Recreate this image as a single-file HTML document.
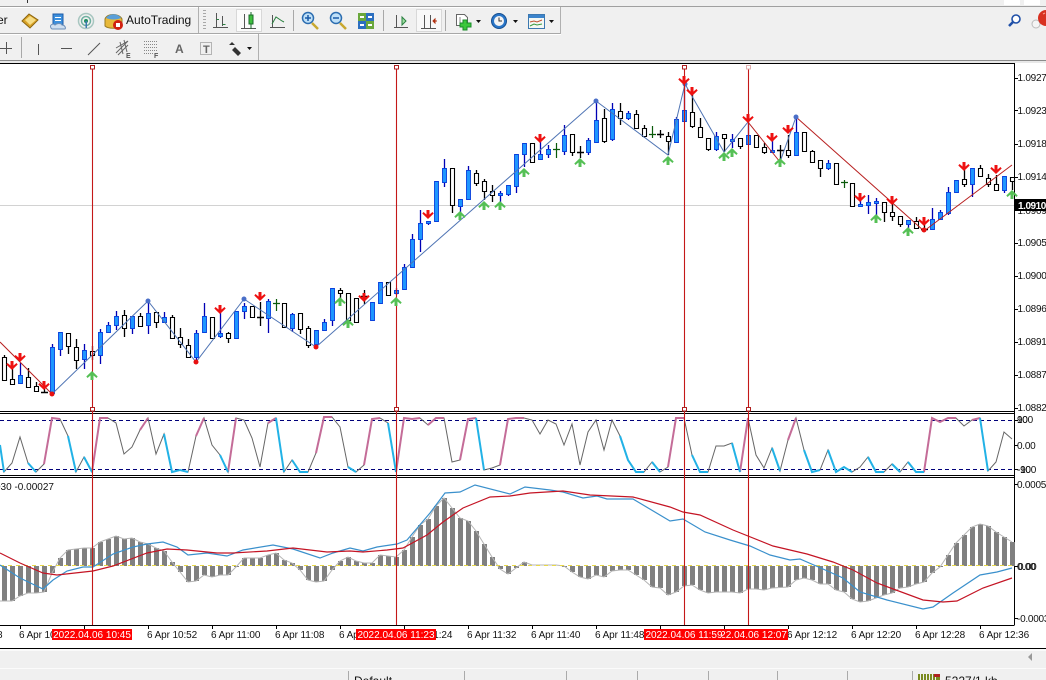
<!DOCTYPE html>
<html><head><meta charset="utf-8"><style>
html,body{margin:0;padding:0;width:1046px;height:680px;overflow:hidden;background:#f0f0f0}
svg{position:absolute;left:0;top:0;display:block}
text{font-family:"Liberation Sans",sans-serif;font-size:10px;fill:#111}
.t text{text-anchor:start;letter-spacing:-.1px}
.p text{letter-spacing:-.25px}
.tag text{fill:#fff;text-anchor:middle}
</style></head><body>
<svg width="1046" height="680" viewBox="0 0 1046 680" xmlns="http://www.w3.org/2000/svg">
<defs>
<path id="ad" d="M-1.5 -5h3v4.5l3 -2.5l1.200 1.500l-5.700 5.500l-5.700 -5.500l1.200 -1.500l3 2.500z"/>
<path id="au" d="M-1.500 5h3v-4.500l3 2.500l1.200 -1.500l-5.700 -5.500l-5.700 5.500l1.200 1.500l3 -2.500z"/>
<path id="dd" d="M0 0h5l-2.500 3z" />
</defs>
<!-- toolbar bg -->
<rect width="1046" height="64" fill="#f0f0f0"/>
<rect x="1004" y="0" width="16" height="5" fill="#fff"/><rect x="1024" y="0" width="16" height="5" fill="#fff"/>
<rect x="27" y="0" width="1" height="3" fill="#333"/>
<rect y="6" width="1046" height="1" fill="#a0a0a0"/>
<rect y="7" width="561" height="1" fill="#fff"/>
<rect y="33" width="561" height="1" fill="#a8a8a8"/><rect y="34" width="561" height="1" fill="#fff"/>
<rect x="560" y="7" width="1" height="27" fill="#b0b0b0"/>
<rect x="258" y="34" width="1" height="26" fill="#b0b0b0"/>
<rect y="60" width="1046" height="1" fill="#8c8c8c"/><rect y="61" width="1046" height="2" fill="#e8e8e8"/>
<text x="-3" y="24" style="font-size:12px">er</text>
<!-- book -->
<path d="M22 21l7-7 9 6-8 8z" fill="#d9a227" stroke="#8a6510"/><path d="M25 20l5-4 6 4-6 5z" fill="#f6dd86"/>
<!-- doc/cloud -->
<rect x="53" y="14" width="10" height="11" fill="#3c8fdc" stroke="#1e5ba8"/><rect x="55" y="17" width="6" height="1" fill="#fff"/><rect x="55" y="20" width="6" height="1" fill="#fff"/>
<path d="M51 28c-2-3 2-5 4-3 2-2 6-2 7 0 3 0 4 3 3 4H52z" fill="#cfdff0" stroke="#6d8fb8"/>
<!-- radar -->
<circle cx="86" cy="21" r="7.500" fill="none" stroke="#a8c6c0" stroke-width="1.500"/><circle cx="86" cy="21" r="4.500" fill="none" stroke="#6fb0a0" stroke-width="1.500"/><circle cx="86" cy="21" r="2" fill="#1f8f5f"/><rect x="85.500" y="21" width="1.500" height="7" fill="#3c78b0"/>
<!-- autotrading -->
<path d="M105 19c2-6 14-6 17 0v7c-3 3-14 3-17 0z" fill="#e8b93a" stroke="#9a7a20"/><path d="M106 18c3-5 12-5 15 0-4 2-11 2-15 0z" fill="#5a9fd8"/>
<circle cx="118" cy="25" r="5" fill="#d02010"/><rect x="116" y="23" width="4" height="4" fill="#fff"/>
<text x="126" y="24" style="font-size:12px;letter-spacing:.03px">AutoTrading</text>
<!-- grip -->
<path d="M203 10.500h3M203 13.500h3M203 16.500h3M203 19.500h3M203 22.500h3M203 25.500h3M203 28.500h3" stroke="#a8a8a8"/>
<rect x="198" y="7" width="1" height="26" fill="#b0b0b0"/>
<!-- chart icons -->
<g stroke="#555" fill="none"><path d="M216.500 13v14M213 27.500h15M222.500 16v10"/><path d="M219 19.500h-2.500M222.500 24.500h3" stroke="#2a8040"/></g>
<rect x="236.500" y="9.500" width="25" height="22" fill="#fbfbfb" stroke="#d8d8d8"/>
<g stroke="#555" fill="none"><path d="M244.500 14v14M241 28.500h15"/></g><path d="M251 12v17" stroke="#1a6a2a"/><rect x="249" y="15" width="4" height="9" fill="#3fc03f" stroke="#1a6a2a"/>
<g stroke="#555" fill="none"><path d="M272.500 15v13M270 27.500h15"/><path d="M272 24l4-7 6 4 2 1" stroke="#2a8040"/></g>
<rect x="293" y="10" width="1" height="21" fill="#a8a8a8"/>
<!-- zoom -->
<circle cx="308" cy="18" r="5.500" fill="#bfe0f8" stroke="#2c6db0" stroke-width="1.500"/><path d="M305 18h6M308 15v6" stroke="#1a5aa8" stroke-width="1.500"/><path d="M312 23l6 6" stroke="#c8a830" stroke-width="2.500"/>
<circle cx="336" cy="18" r="5.500" fill="#bfe0f8" stroke="#2c6db0" stroke-width="1.500"/><path d="M333 18h6" stroke="#1a5aa8" stroke-width="1.500"/><path d="M340 23l6 6" stroke="#c8a830" stroke-width="2.500"/>
<!-- tile -->
<rect x="358" y="13" width="8" height="8" fill="#6aa83c"/><rect x="366" y="13" width="8" height="8" fill="#2c6fc0"/><rect x="358" y="21" width="8" height="8" fill="#2c6fc0"/><rect x="366" y="21" width="8" height="8" fill="#6aa83c"/>
<path d="M360 17h4M368 17h4M360 25h4M368 25h4" stroke="#fff" stroke-width="2"/>
<rect x="383" y="10" width="1" height="21" fill="#a8a8a8"/>
<g stroke="#555" fill="none"><path d="M396.500 15v13M394 27.500h14"/></g><path d="M402 17v8l4-4z" fill="#9fe0a0" stroke="#2a8040"/>
<rect x="416.500" y="9.500" width="25" height="22" fill="#f8f8f8" stroke="#d8d8d8"/>
<g stroke="#555" fill="none"><path d="M424.500 15v13M421 28.500h15M430.500 15v13"/></g><path d="M437 21h-4M433 21l2-2v4z" stroke="#b03010" fill="#b03010"/>
<rect x="445" y="10" width="1" height="21" fill="#a8a8a8"/>
<!-- new order -->
<path d="M456.500 14.500h8l3 3v8h-11z" fill="#fff" stroke="#666"/><path d="M460 17v7" stroke="#888"/>
<path d="M463 20h4v3h4v4h-4v3h-4v-3h-3v-4h3z" fill="#3cc83c" stroke="#1a8a2a"/>
<use href="#dd" x="476" y="20" fill="#111"/>
<circle cx="499" cy="21" r="7.500" fill="#2a76c8" stroke="#174f90"/><circle cx="499" cy="21" r="5" fill="#f4f4f4"/><path d="M499 17.500v3.500h3" stroke="#333" fill="none"/>
<use href="#dd" x="513" y="20" fill="#111"/>
<rect x="528.500" y="14.500" width="16" height="14" fill="#f4f8f4" stroke="#3c78b0"/><rect x="529" y="15" width="15" height="3" fill="#3c84cc"/><path d="M530 22l4-1 3 1 5-2" stroke="#c05030" fill="none"/><path d="M530 26l4-2 3 1 5-1" stroke="#3a9a40" fill="none"/>
<use href="#dd" x="549" y="20" fill="#111"/>
<!-- right icons -->
<circle cx="1016" cy="19" r="4" fill="#fff" stroke="#2050a8" stroke-width="1.600"/><path d="M1013 22l-4 4" stroke="#2050a8" stroke-width="2.600"/>
<ellipse cx="1036" cy="24" rx="4" ry="4" fill="#f4f4f4" stroke="#bbb"/><circle cx="1046" cy="18" r="8" fill="#d83020"/><path d="M1043 14l2-1" stroke="#f8a090"/>
<!-- row2 -->
<path d="M6.500 42v12M0 48.500h12" stroke="#555" /><rect x="21" y="37" width="1" height="21" fill="#a8a8a8"/>
<path d="M38.500 44v11M61 48.500h11M88 55l12-12" stroke="#555" fill="none"/>
<path d="M116 53l12-12M116 48l12-7M118 55l10-10M120 42l3 12M124 40l3 12" stroke="#666" fill="none"/><text x="126" y="58" style="font-size:7px;font-weight:bold;fill:#555">E</text>
<path d="M144 41.500h13M144 44.500h13M144 47.500h13M144 50.500h13M144 53.500h9" stroke="#888" stroke-dasharray="1 1"/><text x="154" y="58" style="font-size:7px;font-weight:bold;fill:#555">F</text>
<text x="175" y="53" style="font-size:12px;font-weight:bold;fill:#666">A</text>
<rect x="200.500" y="42.500" width="11" height="12" fill="none" stroke="#777" stroke-dasharray="1 1"/><text x="203" y="53" style="font-size:11px;font-weight:bold;fill:#666">T</text>
<path d="M229 45l3-3 3 3zM232 50l3-3 3 3 3 3-3 3-3-3z" fill="#333"/><use href="#dd" x="247" y="47" fill="#111"/>

<!-- chart panes -->
<rect x="0" y="63" width="1046" height="587" fill="#fff"/>
<path d="M0 63.500H1014.500V625.500M0 411.500H1014M0 413.500H1014M0 475.500H1014M0 477.500H1014M0 625.500H1014" stroke="#000" fill="none" shape-rendering="crispEdges"/>
<path d="M0 205.500H1014" stroke="#d2d2d2"/>
<!-- stoch dashes -->
<path d="M0 420.500H1014M0 469.500H1014" stroke="#00007a" stroke-dasharray="4 3"/>

<!-- candles wicks -->
<path fill="none" stroke="#000" stroke-width="1.300" d="M4.500 355V381M12.500 368V384M28.500 368V388M36.500 382V391M44.500 388V393M68.500 333V354M76.500 339V369M92.500 346V360M124.500 310V337M140.500 313V326M156.500 312V328M172.500 315V338M180.500 328V348M188.500 339V358M212.500 317V338M228.500 332V343M252.500 306V318M260.500 302V326M284.500 303V327M300.500 313V334M308.500 326V348M340.500 288V300M348.500 293V320M356.500 298V322M364.500 290V304M388.500 282V295M452.500 168V213M476.500 170V186M484.500 179V200M492.500 185V202M532.500 143V162M572.500 134V156M580.500 146V158M604.500 109V143M620.500 103V125M636.500 110V128M644.500 125V138M660.500 130V138M668.500 132V155M692.500 95V128M700.500 118V137M708.500 138V151M724.500 134V152M740.500 138V149M756.500 135V148M764.500 143V154M780.500 145V160M788.500 135V158M804.500 132V151M812.500 150V162M820.500 160V177M836.500 163V184M852.500 183V206M884.500 202V222M892.500 204V221M900.500 216V227M916.500 217V228M924.500 225V231M964.500 170V187M980.500 165V176M988.500 174V187M996.500 175V190M1012.500 177V190"/>
<path fill="none" stroke="#0000b4" stroke-width="1.300" d="M20.500 363V383M52.500 344V393M60.500 332V356M84.500 344V369M100.500 329V364M108.500 322V333M116.500 311V330M132.500 316V334M148.500 302V334M164.500 312V322M196.500 330V360M204.500 303V333M220.500 313V338M236.500 311V339M244.500 303V319M268.500 299V333M292.500 313V332M316.500 330V346M324.500 319V330M332.500 288V326M372.500 302V320M380.500 282V303M396.500 288V295M404.500 264V289M412.500 234V267M420.500 210V252M428.500 221V225M436.500 181V221M444.500 159V187M460.500 199V215M468.500 166V199M500.500 191V202M508.500 185V196M516.500 154V193M524.500 143V167M540.500 142V160M548.500 145V158M564.500 125V155M588.500 138V155M596.500 100V142M612.500 103V141M628.500 111V120M676.500 117V142M684.500 85V121M716.500 132V151M732.500 134V148M748.500 122V144M772.500 135V152M796.500 117V155M828.500 160V170M860.500 197V206M868.500 195V214M876.500 198V220M908.500 220V228M932.500 208V230M940.500 210V219M948.500 187V215M956.500 180V192M972.500 168V197M1004.500 176V193"/>
<path fill="none" stroke="#0a5a0a" stroke-width="1.200" d="M276.500 299V311M273 303.500H280M556.500 143V158M553 149.500H560M652.500 126V138M649 134.500H656M844.500 180V188M841 182.500H848"/>
<!-- white bodies -->
<path fill="#fff" stroke="#000" stroke-width="1.100" d="M2.500 357.500h4v23h-4zM10.500 379.500h4v5h-4zM26.500 377.500h4v10h-4zM34.500 386.500h4v5h-4zM66.500 333.500h4v13h-4zM74.500 347.500h4v13h-4zM90.500 351.500h4v4h-4zM122.500 315.500h4v13h-4zM138.500 316.500h4v10h-4zM154.500 312.500h4v10h-4zM170.500 317.500h4v21h-4zM178.500 337.500h4v7h-4zM186.500 345.500h4v12h-4zM210.500 317.500h4v21h-4zM226.500 333.500h4v5h-4zM250.500 306.500h4v11h-4zM282.500 303.500h4v24h-4zM298.500 313.500h4v16h-4zM306.500 328.500h4v17h-4zM338.500 290.500h4v3h-4zM346.500 293.500h4v27h-4zM354.500 298.500h4v24h-4zM386.500 282.500h4v13h-4zM450.500 168.500h4v37h-4zM474.500 173.500h4v10h-4zM482.500 181.500h4v10h-4zM490.500 191.500h4v4h-4zM530.500 143.500h4v19h-4zM570.500 134.500h4v18h-4zM602.500 118.500h4v23h-4zM618.500 111.500h4v7h-4zM634.500 114.500h4v14h-4zM642.500 128.500h4v8h-4zM666.500 136.500h4v5h-4zM690.500 112.500h4v14h-4zM698.500 127.500h4v10h-4zM706.500 138.500h4v11h-4zM722.500 134.500h4v4h-4zM738.500 138.500h4v8h-4zM754.500 135.500h4v12h-4zM762.500 147.500h4v5h-4zM786.500 150.500h4v5h-4zM802.500 132.500h4v19h-4zM810.500 151.500h4v11h-4zM818.500 160.500h4v8h-4zM834.500 163.500h4v21h-4zM850.500 183.500h4v23h-4zM882.500 202.500h4v10h-4zM890.500 212.500h4v4h-4zM898.500 216.500h4v8h-4zM914.500 221.500h4v7h-4zM962.500 179.500h4v5h-4zM978.500 168.500h4v8h-4zM986.500 178.500h4v6h-4zM994.500 184.500h4v6h-4zM1010.500 177.500h4v4h-4z"/>
<!-- dojis black -->
<path stroke="#000" stroke-width="1.600" d="M41 392.500h7M257 317.500h7M361 296.500h7M577 152.500h7M657 134.500h7M777 150.500h7M921 229.500h7"/>
<!-- blue bodies -->
<path fill="#1e96ff" stroke="#0a40dc" stroke-width=".9" d="M18.500 375.500h4v8h-4zM50.500 347.500h4v46h-4zM58.500 332.500h4v17h-4zM82.500 350.500h4v9h-4zM98.500 332.500h4v23h-4zM106.500 325.500h4v7h-4zM114.500 316.500h4v9h-4zM130.500 316.500h4v12h-4zM146.500 313.500h4v12h-4zM162.500 317.500h4v5h-4zM194.500 333.500h4v24h-4zM202.500 316.500h4v16h-4zM218.500 333.500h4v3h-4zM234.500 311.500h4v27h-4zM242.500 306.500h4v5h-4zM266.500 301.500h4v17h-4zM290.500 314.500h4v14h-4zM314.500 330.500h4v14h-4zM322.500 322.500h4v8h-4zM330.500 288.500h4v32h-4zM370.500 302.500h4v18h-4zM378.500 282.500h4v21h-4zM394.500 290.500h4v3h-4zM402.500 267.500h4v22h-4zM410.500 239.500h4v28h-4zM418.500 223.500h4v16h-4zM426.500 221.500h4v2h-4zM434.500 181.500h4v40h-4zM442.500 168.500h4v14h-4zM458.500 199.500h4v7h-4zM466.500 170.500h4v29h-4zM498.500 193.500h4v2h-4zM506.500 185.500h4v9h-4zM514.500 154.500h4v32h-4zM522.500 143.500h4v11h-4zM538.500 154.500h4v5h-4zM546.500 149.500h4v5h-4zM562.500 135.500h4v16h-4zM586.500 140.500h4v12h-4zM594.500 120.500h4v22h-4zM610.500 109.500h4v30h-4zM626.500 113.500h4v5h-4zM674.500 119.500h4v23h-4zM682.500 110.500h4v11h-4zM714.500 136.500h4v13h-4zM730.500 139.500h4v2h-4zM746.500 135.500h4v9h-4zM770.500 150.500h4v2h-4zM794.500 132.500h4v23h-4zM826.500 163.500h4v5h-4zM858.500 204.500h4v2h-4zM866.500 202.500h4v3h-4zM874.500 201.500h4v2h-4zM906.500 220.500h4v4h-4zM930.500 219.500h4v10h-4zM938.500 212.500h4v7h-4zM946.500 192.500h4v21h-4zM954.500 180.500h4v12h-4zM970.500 168.500h4v16h-4zM1002.500 176.500h4v14h-4z"/>

<!-- zigzag -->
<path fill="none" stroke="#4f74b4" stroke-width="1" d="M52 394L148 301L196 362L244 299L316 347L596 101L668 155L685 84L724 152L748 122M780 162L796 117"/>
<path fill="none" stroke="#b82020" stroke-width="1" d="M0 342L52 394M748 122L780 162M796 117L924 231L1012 165"/>
<circle cx="148" cy="301" r="2.500" fill="#4a6fc8"/><circle cx="244" cy="299" r="2.500" fill="#4a6fc8"/><circle cx="596" cy="101" r="2.500" fill="#4a6fc8"/><circle cx="796" cy="117" r="2.500" fill="#4a6fc8"/><circle cx="685" cy="84" r="2.500" fill="#4a6fc8"/>
<circle cx="52" cy="394" r="2.500" fill="#e81010"/><circle cx="196" cy="362" r="2.500" fill="#e81010"/><circle cx="316" cy="347" r="2.500" fill="#e81010"/><circle cx="924" cy="230" r="2.500" fill="#e81010"/>

<!-- stochastic -->
<polyline fill="none" stroke="#666" stroke-width="1" points="0,445 4,472 12,463 20,437 28,463 36,472 44,464 52,418 60,419 68,436 76,472 84,457 92,472 100,418 108,418 116,423 124,454 132,447 140,430 148,418 156,454 164,434 172,472 180,470 188,472 196,436 204,418 212,445 220,455 228,472 236,418 244,420 252,438 260,467 268,423 276,418 284,472 292,460 300,472 308,472 316,453 324,417 332,417 340,427 348,467 356,472 364,465 372,419 380,418 388,423 396,472 404,418 412,419 420,418 428,425 436,418 444,418 452,462 460,460 468,419 476,418 484,470 492,468 500,465 508,419 516,418 524,418 532,420 540,434 548,420 556,424 564,445 572,424 580,465 588,432 596,420 604,450 612,420 620,436 628,460 636,472 644,472 652,462 660,472 668,467 676,418 684,418 692,455 700,472 708,472 716,446 724,446 732,443 740,472 748,418 756,455 764,468 772,448 780,471 788,440 796,418 804,450 812,472 820,470 828,450 836,472 844,467 852,472 860,467 868,457 876,472 884,472 892,464 900,472 908,462 916,472 924,472 932,418 940,422 948,418 956,418 964,426 972,420 980,418 988,471 996,462 1004,432 1012,439"/>
<path fill="none" stroke="#c46c98" stroke-width="2" d="M44 464L52 418L60 419M92 472L100 418L108 418M140 430L148 418M196 436L204 418M228 472L236 418M268 423L276 418M316 453L324 417L332 417M364 465L372 419L380 418M396 472L404 418L412 419L420 418M428 425L436 418L444 418M460 460L468 419L476 418M500 465L508 419L516 418L524 418M668 467L676 418L684 418M740 472L748 418M788 440L796 418M924 472L932 418L940 422L948 418L956 418M972 420L980 418"/>
<path fill="none" stroke="#22b2e6" stroke-width="2" d="M0 445L4 472M28 463L36 472M68 436L76 472M84 457L92 472M164 434L172 472L180 470L188 472M220 455L228 472M276 418L284 472M292 460L300 472L308 472M348 467L356 472M388 423L396 472M476 418L484 470M620 436L628 460L636 472L644 472M652 462L660 472M692 455L700 472L708 472M732 443L740 472M772 448L780 471M804 450L812 472L820 470M828 450L836 472L844 467L852 472M868 457L876 472L884 472M892 464L900 472M908 462L916 472L924 472M980 418L988 471"/>

<!-- MACD histogram -->
<g stroke="#808080" stroke-width="5" fill="none">
<path d="M4.500 566V601M12.500 566V601M20.500 566V596M28.500 566V593M36.500 566V593M44.500 566V592M52.500 566V573M60.500 566V558M68.500 566V550M76.500 566V549M84.500 566V548M92.500 566V548M100.500 566V542M108.500 566V539M116.500 566V536M124.500 566V539M132.500 566V538M140.500 566V542M148.500 566V544M156.500 566V548M164.500 566V551M172.500 566V562M180.500 566V572M188.500 566V582M196.500 566V581M204.500 566V575M212.500 566V577M220.500 566V575M228.500 566V575M236.500 566V567M244.500 566V558M252.500 566V558M260.500 566V558M268.500 566V555M276.500 566V553M284.500 566V560M292.500 566V563M300.500 566V570M308.500 566V580M316.500 566V582M324.500 566V581M332.500 566V570M340.500 566V561M348.500 566V557M356.500 566V561M364.500 566V563M372.500 566V563M380.500 566V555M388.500 566V556M396.500 566V557M404.500 566V550M412.500 566V537M420.500 566V525M428.500 566V519M436.500 566V506M444.500 566V498M452.500 566V508M460.500 566V518M468.500 566V521M476.500 566V531M484.500 566V544M492.500 566V557M500.500 566V569M508.500 566V574M516.500 566V568M524.500 566V562M564.500 566V567M572.500 566V572M580.500 566V577M588.500 566V579M596.500 566V575M604.500 566V577M612.500 566V571M620.500 566V570M628.500 566V570M636.500 566V575M644.500 566V580M652.500 566V587M660.500 566V588M668.500 566V595M676.500 566V592M684.500 566V586M692.500 566V585M700.500 566V590M708.500 566V593M716.500 566V592M724.500 566V592M732.500 566V592M740.500 566V593M748.500 566V589M756.500 566V589M764.500 566V590M772.500 566V588M780.500 566V587M788.500 566V587M796.500 566V580M804.500 566V578M812.500 566V580M820.500 566V584M828.500 566V584M836.500 566V590M844.500 566V592M852.500 566V599M860.500 566V602M868.500 566V601M876.500 566V598M884.500 566V595M892.500 566V593M900.500 566V588M908.500 566V587M916.500 566V584M924.500 566V582M932.500 566V573M940.500 566V567M948.500 566V555M956.500 566V543M964.500 566V535M972.500 566V527M980.500 566V524M988.500 566V526M996.500 566V532M1004.500 566V537M1012.500 566V542"/>
</g>
<polyline fill="none" stroke="#b4b4b4" stroke-width="1" points="0,601 12,601 20,596 28,593 36,593 44,592 52,573 60,558 68,550 76,549 84,548 92,548 100,542 108,539 116,536 124,539 132,538 140,542 148,544 156,548 164,551 172,562 180,572 188,582 196,581 204,575 212,577 220,575 228,575 236,567 244,558 252,558 260,558 268,555 276,553 284,560 292,563 300,570 308,580 316,582 324,581 332,570 340,561 348,557 356,561 364,563 372,563 380,555 388,556 396,557 404,550 412,537 420,525 428,519 436,506 444,498 452,508 460,518 468,521 476,531 484,544 492,557 500,569 508,574 516,568 524,562 532,565 556,565 564,566 572,572 580,577 588,579 596,575 604,577 612,571 620,570 628,570 636,575 644,580 652,587 660,588 668,595 676,592 684,586 692,585 700,590 708,593 716,592 732,592 740,593 748,589 756,589 764,590 772,588 788,587 796,580 804,578 812,580 820,584 828,584 836,590 844,592 852,599 860,602 868,601 876,598 884,595 892,593 900,588 908,587 916,584 924,582 932,573 940,567 948,555 956,543 964,535 972,527 980,524 988,526 996,532 1004,537 1012,542"/>
<path d="M0 565.500H1014" stroke="#e8d848" stroke-dasharray="4 4"/>
<polyline fill="none" stroke="#3a90cc" stroke-width="1.200" points="0,565 20,578 43,589 53,580 67,571 83,567 93,567 113,554 133,547 147,544 163,542 177,547 188,555 207,553 227,556 243,550 273,545 293,549 320,558 333,553 350,548 363,551 377,547 397,544 407,540 430,513 445,493 460,492 475,485 510,494 525,487 550,490 563,492 583,498 597,496 607,499 633,499 670,521 683,519 705,532 730,540 750,546 770,555 790,560 800,559 823,569 843,578 860,592 887,600 923,609 933,607 953,593 980,575 997,572 1012,568"/>
<polyline fill="none" stroke="#c41424" stroke-width="1.200" points="0,553 20,563 43,573 57,575 93,571 113,566 147,553 167,549 187,550 217,553 233,553 267,551 293,548 327,552 350,551 363,552 387,550 403,548 427,535 443,522 463,508 490,497 510,496 530,493 563,491 590,495 633,497 670,507 683,512 700,515 733,530 773,546 807,554 833,562 853,570 877,583 923,600 943,602 957,601 983,588 1012,578"/>

<!-- vertical lines -->
<path d="M92.500 65V625M396.500 65V625M684.500 65V625M748.500 65V625" stroke="#c41818" stroke-width="1.100"/>
<g fill="#fff" stroke="#b02020"><rect x="90.500" y="65.500" width="4" height="3.500"/><rect x="394.500" y="65.500" width="4" height="3.500"/><rect x="682.500" y="65.500" width="4" height="3.500"/><rect x="746.500" y="65.500" width="4" height="3.500" stroke="#e0b0b0"/><rect x="90.500" y="407.500" width="4" height="3.500"/><rect x="394.500" y="407.500" width="4" height="3.500"/><rect x="682.500" y="407.500" width="4" height="3.500"/><rect x="746.500" y="407.500" width="4" height="3.500"/></g>

<!-- arrows -->
<g fill="#ee1111">
<use href="#ad" x="12" y="366"/><use href="#ad" x="20" y="358"/><use href="#ad" x="44" y="386"/><use href="#ad" x="220" y="310"/><use href="#ad" x="260" y="297"/><use href="#ad" x="364" y="298"/><use href="#ad" x="428" y="215"/><use href="#ad" x="540" y="139"/><use href="#ad" x="684" y="81"/><use href="#ad" x="692" y="92"/><use href="#ad" x="748" y="119"/><use href="#ad" x="772" y="138"/><use href="#ad" x="788" y="130"/><use href="#ad" x="860" y="198"/><use href="#ad" x="892" y="201"/><use href="#ad" x="924" y="222"/><use href="#ad" x="964" y="167"/><use href="#ad" x="996" y="170"/>
</g>
<g fill="#55c055">
<use href="#au" x="92" y="375"/><use href="#au" x="340" y="301"/><use href="#au" x="348" y="323"/><use href="#au" x="396" y="301"/><use href="#au" x="460" y="215"/><use href="#au" x="484" y="205"/><use href="#au" x="500" y="205"/><use href="#au" x="524" y="172"/><use href="#au" x="580" y="162"/><use href="#au" x="668" y="160"/><use href="#au" x="724" y="156"/><use href="#au" x="732" y="152"/><use href="#au" x="780" y="162"/><use href="#au" x="876" y="218"/><use href="#au" x="908" y="231"/><use href="#au" x="1012" y="194"/>
</g>

<!-- price axis -->
<path d="M1015 78.500h3M1015 110.500h3M1015 144.500h3M1015 177.500h3M1015 243.500h3M1015 276.500h3M1015 309.500h3M1015 342.500h3M1015 375.500h3M1015 408.500h3M1015 420.500h3M1015 445.500h3M1015 469.500h3M1015 484.500h3M1015 566.500h3M1015 618.500h3" stroke="#000"/>
<g class="p">
<text x="1017.500" y="81">1.0927</text><text x="1017.500" y="114">1.0923</text><text x="1017.500" y="147">1.0918</text><text x="1017.500" y="180">1.0914</text><text x="1017.500" y="214">1.0909</text><text x="1017.500" y="246">1.0905</text><text x="1017.500" y="279">1.0900</text><text x="1017.500" y="312">1.0896</text><text x="1017.500" y="345">1.0891</text><text x="1017.500" y="378">1.0887</text><text x="1017.500" y="411">1.0882</text>
<text x="1017" y="423">100</text><text x="1017" y="423">90</text><text x="1017" y="449">0.00</text><text x="1017" y="473">-100</text><text x="1017" y="473">-90</text>
<text x="1017" y="488">0.0005</text><text x="1017" y="570">0.00</text><text x="1018" y="570">0.00</text><text x="1017" y="622">-0.0003</text>
</g>
<text x="-5" y="490">030 -0.00027</text>
<rect x="1015" y="199" width="31" height="12" fill="#000"/><text x="1018" y="209" style="fill:#fff;font-weight:bold;letter-spacing:-.45px">1.0910</text>

<!-- time axis -->
<path d="M20.500 625v4M84.500 625v4M148.500 625v4M212.500 625v4M276.500 625v4M340.500 625v4M404.500 625v4M468.500 625v4M532.500 625v4M596.500 625v4M660.500 625v4M724.500 625v4M788.500 625v4M852.500 625v4M916.500 625v4M980.500 625v4" stroke="#000"/>
<g class="t">
<text x="-3" y="638">8</text><text x="19" y="638">6 Apr 10:44</text><text x="147" y="638">6 Apr 10:52</text><text x="211" y="638">6 Apr 11:00</text><text x="275" y="638">6 Apr 11:08</text><text x="339" y="638">6 Apr 11:16</text><text x="403" y="638">6 Apr 11:24</text><text x="467" y="638">6 Apr 11:32</text><text x="531" y="638">6 Apr 11:40</text><text x="595" y="638">6 Apr 11:48</text><text x="787" y="638">6 Apr 12:12</text><text x="851" y="638">6 Apr 12:20</text><text x="915" y="638">6 Apr 12:28</text><text x="979" y="638">6 Apr 12:36</text>
</g>
<g class="tag">
<rect x="52" y="629" width="80" height="11" fill="#f00"/><text x="92" y="638">2022.04.06 10:45</text>
<rect x="356" y="629" width="80" height="11" fill="#f00"/><text x="396" y="638">2022.04.06 11:23</text>
<rect x="708" y="629" width="80" height="11" fill="#f00"/><text x="748" y="638">2022.04.06 12:07</text>
<rect x="644" y="629" width="78" height="11" fill="#f00"/><text x="684" y="638">2022.04.06 11:59</text>
</g>

<!-- bottom -->
<rect y="648" width="1046" height="1" fill="#000"/><rect y="649" width="1046" height="2" fill="#fafafa"/>
<rect y="651" width="1046" height="29" fill="#f0f0f0"/>
<rect y="668" width="1046" height="1" fill="#fbfbfb"/>
<path d="M1032 653v8l-4-4z" fill="#999"/>
<path d="M348.500 671V680M464.500 671V680M566.500 671V680M637.500 671V680M708.500 671V680M777.500 671V680M847.500 671V680M912.500 671V680" stroke="#aaa"/>
<text x="354" y="685" style="font-size:12px">Default</text>
<g><rect x="918" y="674" width="22" height="6" fill="#7a8a20"/><path d="M920.500 674v6M923.500 674v6M926.500 674v6M929.500 674v6M932.500 674v6M935.500 674v6" stroke="#f0f0f0"/><rect x="934" y="674" width="6" height="3" fill="#b02020"/></g>
<text x="945" y="685" style="font-size:12px">5227/1 kb</text>
</svg>
</body></html>
